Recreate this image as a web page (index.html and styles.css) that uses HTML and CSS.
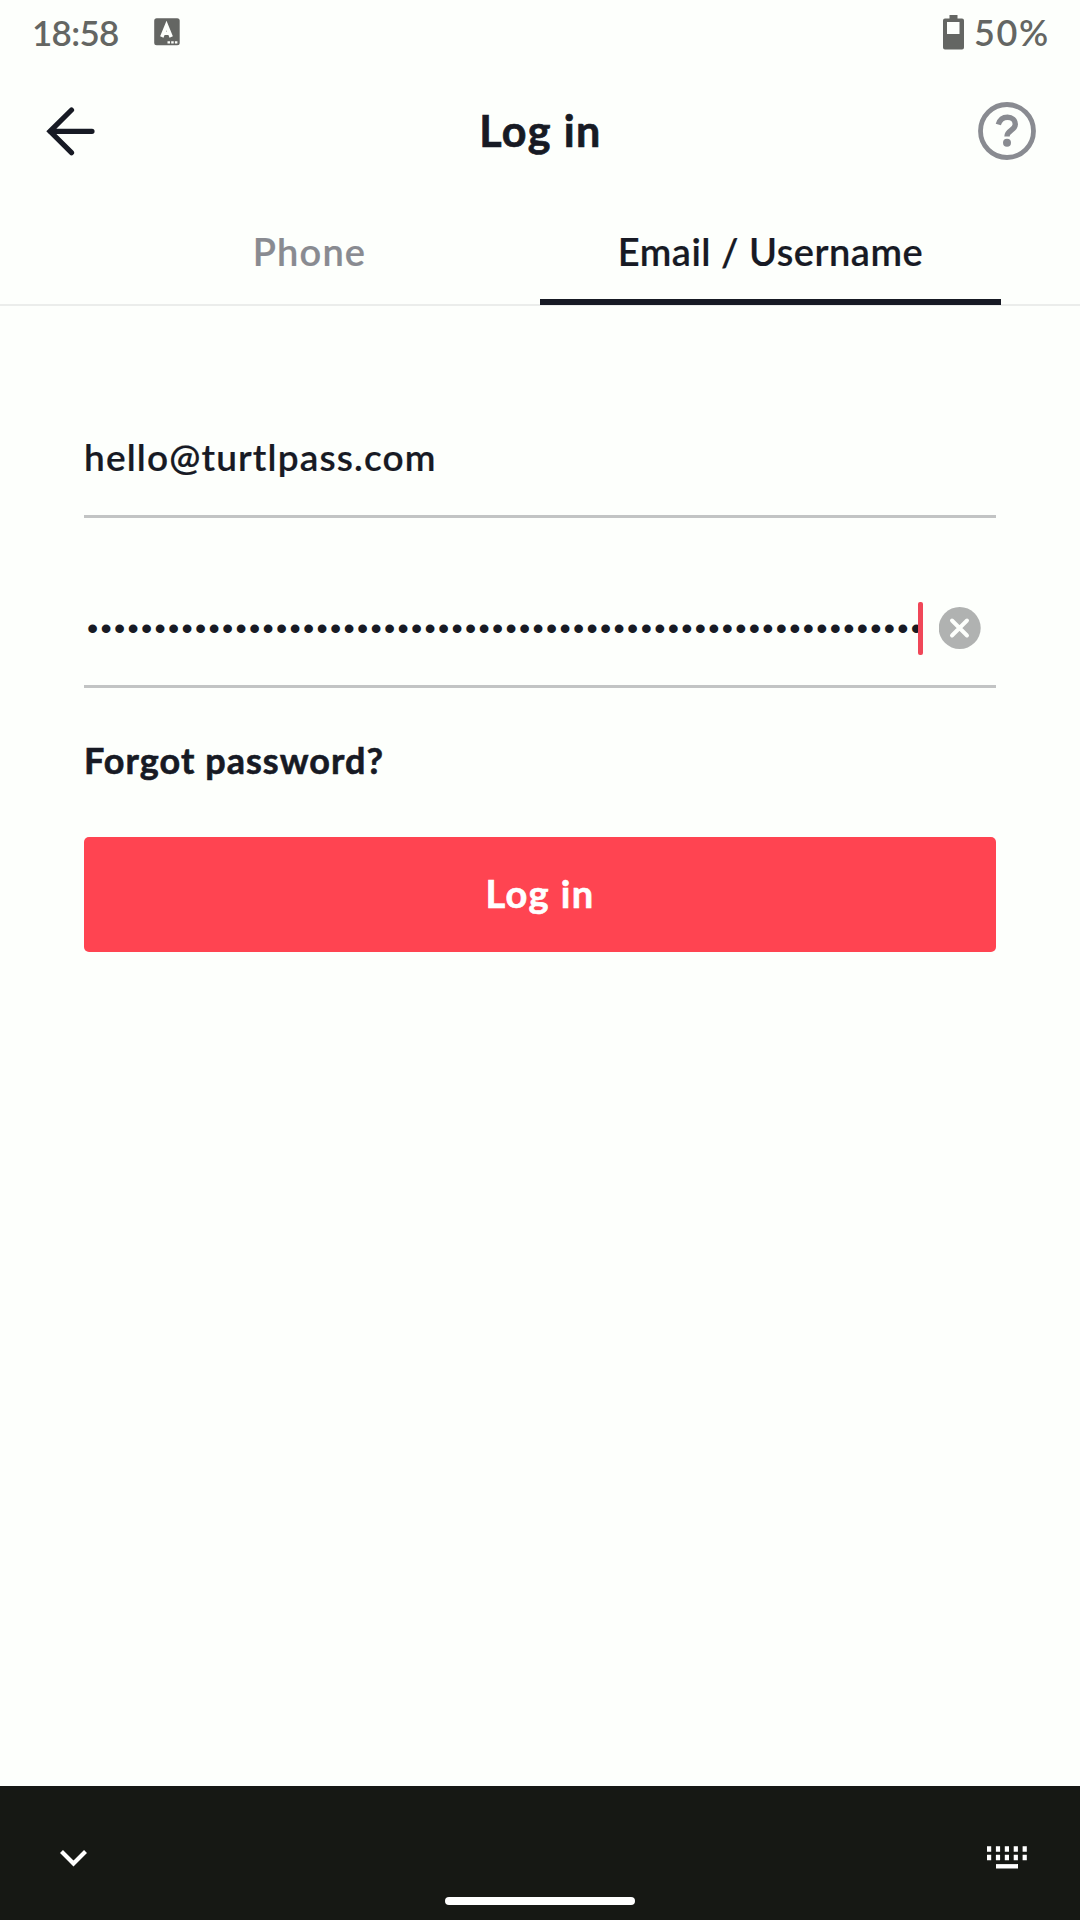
FILE: index.html
```html
<!DOCTYPE html>
<html lang="en">
<head>
<meta charset="utf-8">
<title>Log in</title>
<link rel="stylesheet" href="styles.css">
</head>
<body>
<div class="screen">
  <div class="status">
    <span class="clock">18:58</span>
    <svg class="ime" width="26" height="28" viewBox="0 0 26 28"><rect width="25.5" height="27" x=".2" y=".2" rx="2.500" fill="#646663"/><path d="M7.800 19 12.500 7.500 17.200 19M9.800 15.300h5.400" fill="none" stroke="#fdfffc" stroke-width="3.600"/><path d="M13.500 24.300h2.500m1.200 0h2.500m1.200 0h2.500" stroke="#fdfffc" stroke-width="2.200"/></svg>
    <span class="spacer"></span>
    <svg class="battery" width="21" height="35" viewBox="0 0 21 35"><path fill="#646663" fill-rule="evenodd" d="M6.500 0h8v3.500H19a2 2 0 0 1 2 2V32.500a2 2 0 0 1-2 2H2a2 2 0 0 1-2-2V5.500a2 2 0 0 1 2-2h4.500zM4 7v12h12.500V7z"/></svg>
    <span class="percent">50%</span>
  </div>
  <header class="header">
    <svg width="50" height="50" viewBox="0 0 50 50"><path d="M25.500 4 4 25.300 25.500 46.700M4 25.300H46" fill="none" stroke="#171a24" stroke-width="5.200" stroke-linecap="round"/></svg>
    <h1 class="title">Log in</h1>
    <svg width="58" height="58" viewBox="0 0 58 58" fill="none" stroke="#898b91"><circle cx="29" cy="29" r="26.500" stroke-width="4.800"/><path d="M20.300 22.500C22 17 25.500 15.200 29.500 15.200C34 15.200 37.300 18.300 37.300 22.300C37.300 28.500 29 28 29 34.500" stroke-width="5.400"/><circle cx="29" cy="40.700" r="4" fill="#898b91" stroke="none"/></svg>
  </header>
  <nav class="tabs">
    <div class="tab"><span class="phone">Phone</span></div>
    <div class="tab active"><span class="email">Email / Username</span></div>
  </nav>
  <main class="form">
    <div class="field first"><span class="address">hello@turtlpass.com</span></div>
    <div class="field second"><span class="dots">••••••••••••••••••••••••••••••••••••••••••••••••••••••••••••••</span><span class="caret"></span>
      <svg width="42" height="42" viewBox="0 0 42 42"><circle cx="20.700" cy="21" r="21" fill="#b0b2b1"/><path d="m13 13.500 15 15m0-15-15 15" stroke="#fdfffc" stroke-width="3.900" stroke-linecap="round"/></svg>
    </div>
    <a class="forgot"><span>Forgot password?</span></a>
    <button class="submit"><span>Log in</span></button>
  </main>
  <footer class="keyboard">
    <svg width="27" height="17" viewBox="0 0 27 17"><path d="m1.500 1.500 12 12 12-12" fill="none" stroke="#fff" stroke-width="4.200"/></svg>
    <svg class="keys" width="41" height="23" viewBox="0 0 41 23" stroke="#fff"><path d="M0 3H41M0 11.500H41" stroke-width="5.600" stroke-dasharray="4.200 4.700"/><path d="M9 20.300h22" stroke-width="4.400"/></svg>
    <span class="handle"></span>
  </footer>
</div>
</body>
</html>
```
FILE: styles.css
```css
* { box-sizing: border-box; }
body { margin: 0; background: #fdfffc; font-family: Lato, sans-serif; color: #171a24; }
svg { display: block; flex: none; }
span { white-space: nowrap; }
.screen { width: 1080px; height: 1920px; display: flex; flex-direction: column; }
.status { height: 66px; display: flex; align-items: center; padding: 0 32px; color: #646663; }
.clock, .percent { font-size: 35px; line-height: 40px; font-weight: 600; margin-bottom: 2px; }
.clock { width: 87px; letter-spacing: -0.7px; }
.percent { font-size: 36px; letter-spacing: 1.7px; margin-right: -2px; }
.ime { margin-left: 35px; margin-bottom: 2px; }
.spacer { flex: 1; }
.battery { margin-right: 10px; margin-bottom: 2px; }
.header { height: 130px; display: flex; align-items: center; justify-content: space-between; padding: 0 44px 0 46px; }
.title { margin: 0; padding-left: 7px; font-size: 43px; line-height: 50px; font-weight: 700; letter-spacing: 1.4px; -webkit-text-stroke: 0.7px; }
.tabs { height: 110px; display: flex; padding: 0 79px; border-bottom: 2px solid #ebedeb; }
.tab { flex: 1; display: flex; justify-content: center; padding-top: 33px; font-size: 38px; line-height: 44px; font-weight: 600; color: #898b91; -webkit-text-stroke: 0.2px; }
.phone { letter-spacing: 1.15px; }
.email { letter-spacing: 0.5px; }
.active { color: #171a24; border-bottom: 6px solid #171a24; margin-bottom: -1px; }
.form { flex: 1; display: flex; flex-direction: column; padding: 0 84px; }
.field { display: flex; align-items: center; border-bottom: 3px solid #c2c4c4; }
.first { height: 212px; padding: 92px 0 0; font-size: 37px; line-height: 44px; font-weight: 600; letter-spacing: 1.15px; -webkit-text-stroke: 0.2px; }
.second { height: 170px; padding: 53px 15px 0 3px; }
.dots { width: 831px; font: 32px/44px "Liberation Sans", sans-serif; letter-spacing: 2.3px; }
.caret { width: 5px; height: 53px; border-radius: 2px; background: #f04758; margin-right: 16px; }
.forgot { margin-top: 50px; font-size: 36px; line-height: 44px; font-weight: 700; letter-spacing: 1.05px; -webkit-text-stroke: 0.6px; }
.submit { margin-top: 55px; padding: 0 0 3px; height: 115px; border: 0; border-radius: 5px; background: #ff4451; color: #fff; font: 700 38px/44px Lato, sans-serif; letter-spacing: 1.4px; -webkit-text-stroke: 0.6px; }
.keyboard { position: relative; height: 134px; background: #161814; display: flex; justify-content: space-between; padding: 64px 52px 0 60px; }
.keys { margin-top: -4px; }
.handle { position: absolute; left: 445px; top: 111px; width: 190px; height: 8px; border-radius: 4px; background: #fff; }
```
